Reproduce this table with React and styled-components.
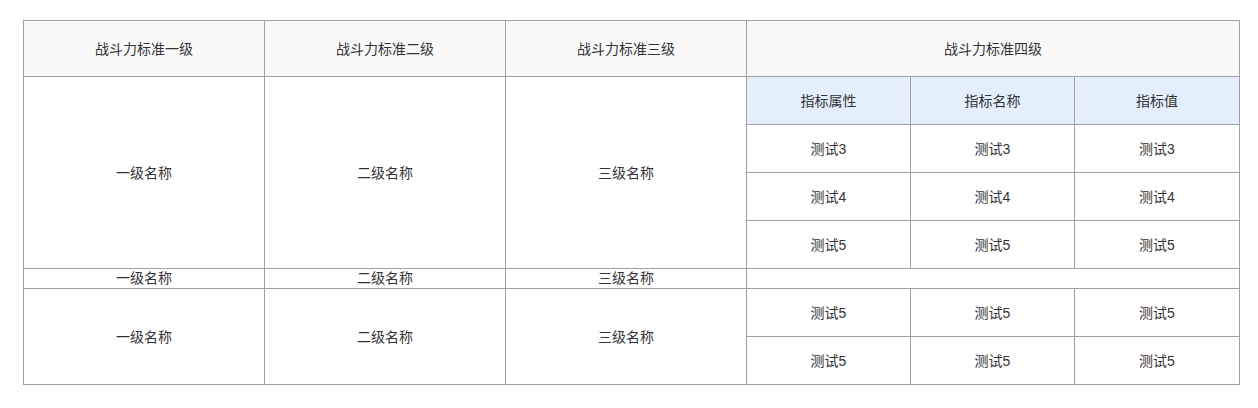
import React from 'react';
import styled, { createGlobalStyle } from 'styled-components';

const GlobalStyle = createGlobalStyle`
    html, body {
        margin: 0;
        padding: 0;
        background: #ffffff;
    }
    body {
        font-family: "Liberation Sans", "Noto Sans CJK SC", sans-serif;
        font-size: 14px;
        color: #333333;
    }
`;

const Page = styled.div`
    padding: 20px 0 0 23px;
`;

const Table = styled.table`
    table-layout: fixed;
    width: 1217px;
    border-collapse: separate;
    border-spacing: 0;
    border-top: 1px solid #a0a0a0;
    border-left: 1px solid #a0a0a0;
`;

const Cell = styled.td`
    box-sizing: border-box;
    height: ${props => props.h || 48}px;
    padding: ${props => (props.h === 20 ? 0 : '2px 0 0')};
    border-right: 1px solid #a0a0a0;
    border-bottom: 1px solid #a0a0a0;
    text-align: center;
    vertical-align: middle;
    line-height: 19px;
    white-space: nowrap;
    background: ${props => props.bg || '#ffffff'};
`;

const HeadCell = styled(Cell).attrs({ as: 'th' })`
    font-weight: normal;
`;

const levels = ['一级名称', '二级名称', '三级名称'];

const LevelCells = ({ rowSpan, h }) => (
    levels.map(name => (
        <Cell key={name} rowSpan={rowSpan} h={h}>{name}</Cell>
    ))
);

const ValueRow = ({ value }) => (
    <>
        <Cell>{value}</Cell>
        <Cell>{value}</Cell>
        <Cell>{value}</Cell>
    </>
);

export default function App() {
    return (
        <Page>
            <GlobalStyle />
            <Table>
                <colgroup>
                    <col style={{ width: 241 }} />
                    <col style={{ width: 241 }} />
                    <col style={{ width: 241 }} />
                    <col style={{ width: 164 }} />
                    <col style={{ width: 164 }} />
                    <col style={{ width: 165 }} />
                </colgroup>
                <thead>
                    <tr>
                        <HeadCell h={56} bg="#f9f9f9">战斗力标准一级</HeadCell>
                        <HeadCell h={56} bg="#f9f9f9">战斗力标准二级</HeadCell>
                        <HeadCell h={56} bg="#f9f9f9">战斗力标准三级</HeadCell>
                        <HeadCell h={56} bg="#f9f9f9" colSpan={3}>战斗力标准四级</HeadCell>
                    </tr>
                </thead>
                <tbody>
                    <tr>
                        <LevelCells rowSpan={4} />
                        <HeadCell bg="#e3effd">指标属性</HeadCell>
                        <HeadCell bg="#e3effd">指标名称</HeadCell>
                        <HeadCell bg="#e3effd">指标值</HeadCell>
                    </tr>
                    <tr><ValueRow value="测试3" /></tr>
                    <tr><ValueRow value="测试4" /></tr>
                    <tr><ValueRow value="测试5" /></tr>
                    <tr>
                        <LevelCells h={20} />
                        <Cell h={20} colSpan={3} />
                    </tr>
                    <tr>
                        <LevelCells rowSpan={2} />
                        <ValueRow value="测试5" />
                    </tr>
                    <tr><ValueRow value="测试5" /></tr>
                </tbody>
            </Table>
        </Page>
    );
}
